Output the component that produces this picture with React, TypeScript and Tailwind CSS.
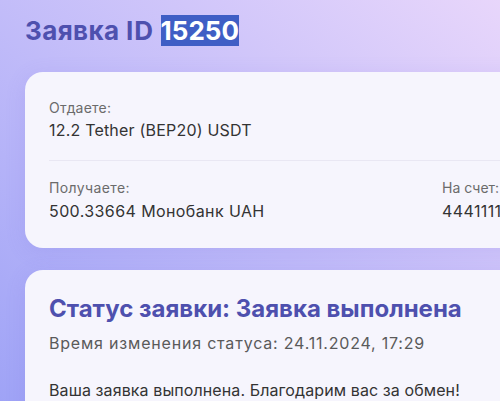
export default function App() {
  return (
    <div
      className="w-[500px] h-[401px] overflow-hidden bg-gradient-to-tr from-[#9fa3f6] to-[#e8d6fb] pl-[25px] pt-[15px]"
      style={{ fontFamily: 'Inter, "Noto Sans", sans-serif' }}
    >
      <h1 className="text-[26px] leading-[31px] tracking-[0.4px] font-bold text-[#4e50ae] mb-[26px] whitespace-nowrap">
        Заявка <span className="tracking-[0.9px]">ID</span>{' '}
        <span className="bg-[#3f5ec5] text-white tracking-[0px]">15250</span>
      </h1>

      <div className="w-[720px] rounded-[18px] bg-[#f6f5fd] shadow-[0_4px_20px_rgba(110,100,220,0.15)] pl-[24px] pt-[27px] pb-[26px]">
        <div className="text-[14px] leading-[18px] tracking-[0.2px] text-[#6b6b6b]">Отдаете:</div>
        <div className="mt-[2px] text-[16px] leading-[22px] tracking-[0.2px] text-[#333]">12.2 Tether (BEP20) USDT</div>

        <div className="mt-[19px] mb-[18px] h-px bg-[#e9e7f3]" />

        <div className="grid grid-cols-[393px_1fr]">
          <div>
            <div className="text-[14px] leading-[18px] tracking-[0.4px] text-[#6b6b6b]">Получаете:</div>
            <div className="mt-[3px] text-[16px] leading-[22px] tracking-[0.4px] text-[#333]">500.33664 Монобанк UAH</div>
          </div>
          <div>
            <div className="text-[14px] leading-[18px] text-[#6b6b6b] whitespace-nowrap">На счет:</div>
            <div className="mt-[3px] text-[16px] leading-[22px] tracking-[0.4px] text-[#333]">4441111111111111</div>
          </div>
        </div>
      </div>

      <div className="mt-[22px] w-[720px] rounded-[18px] bg-[#f6f5fd] shadow-[0_4px_20px_rgba(110,100,220,0.15)] pl-[24px] pt-[24px] pb-[30px]">
        <h2 className="text-[24px] leading-[30px] font-bold text-[#4e50ae]">Статус заявки: Заявка выполнена</h2>
        <div className="mt-[7px] text-[16px] leading-[24px] tracking-[0.8px] text-[#5a5a5a]">Время изменения статуса: 24.11.2024, 17:29</div>
        <div className="mt-[23px] text-[16px] leading-[24px] tracking-[0.1px] text-[#333]">Ваша заявка выполнена. Благодарим вас за обмен!</div>
      </div>
    </div>
  )
}
